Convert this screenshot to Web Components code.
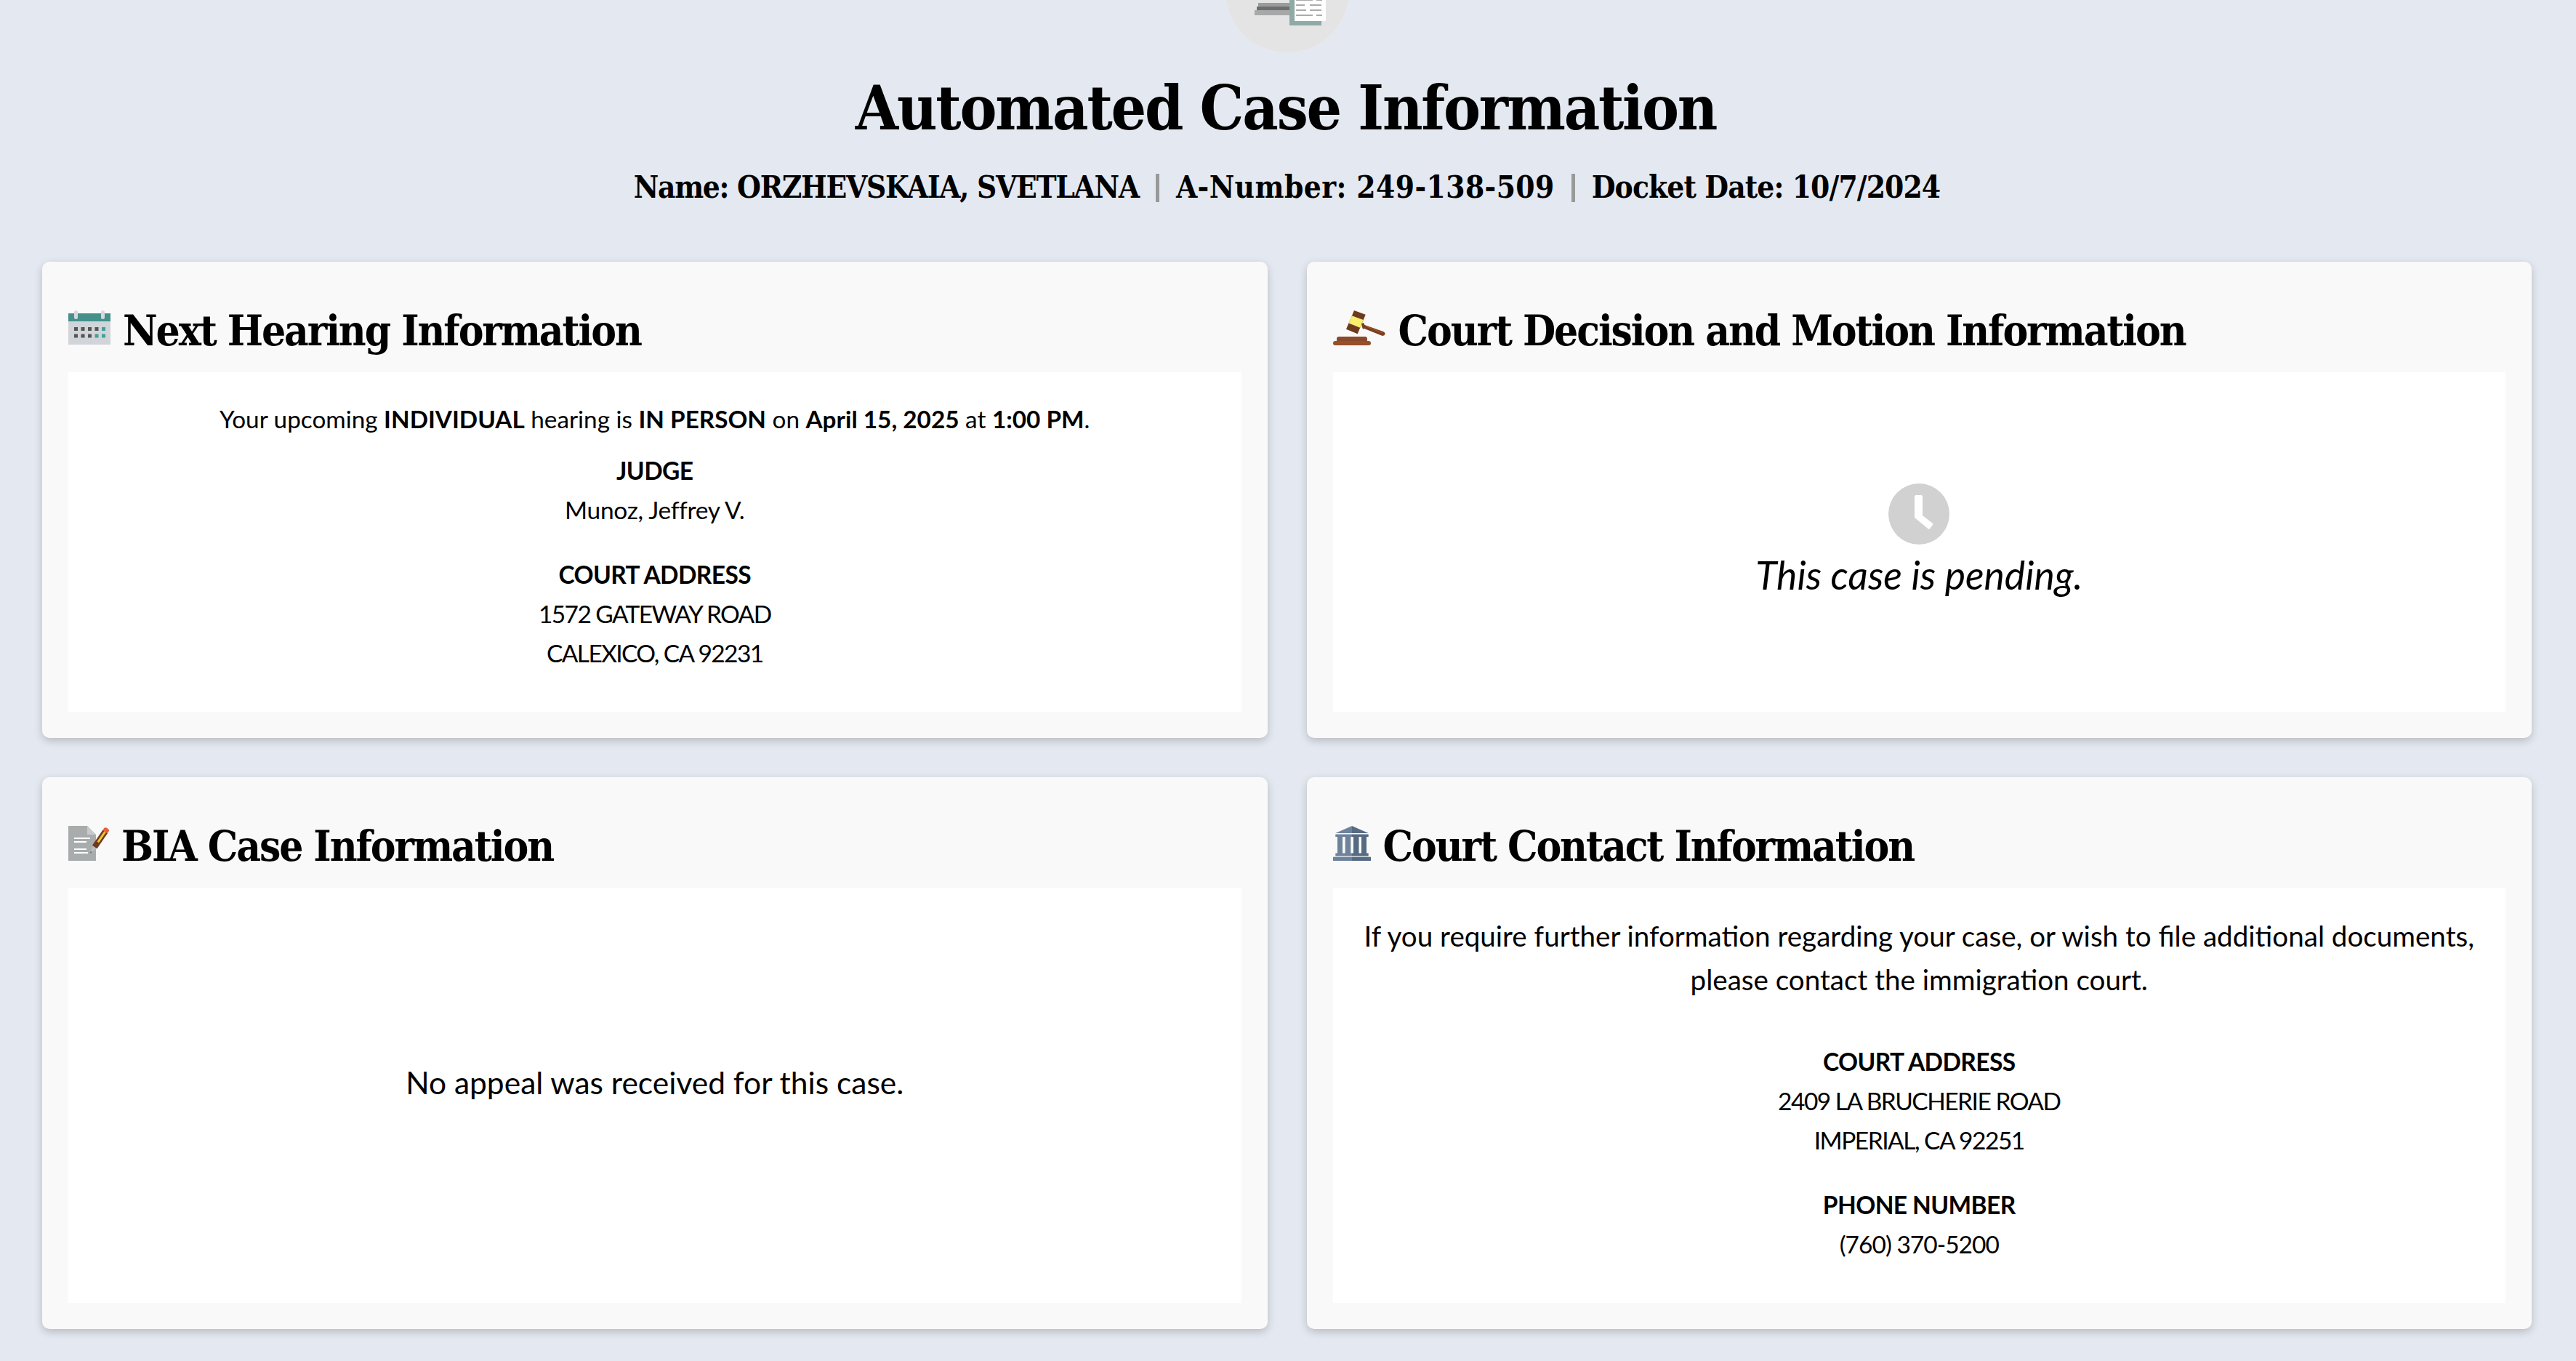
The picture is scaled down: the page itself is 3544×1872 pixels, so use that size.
<!DOCTYPE html>
<html lang="en">
<head>
<meta charset="utf-8">
<title>Automated Case Information</title>
<style>
  html, body { margin: 0; height: 100%; overflow: hidden; background: #e4e9f1; }
  body { font-family: "Lato", "Noto Sans", sans-serif; color: #000; }
</style>
</head>
<body>
<case-page>
  <case-header slot="header" name="ORZHEVSKAIA, SVETLANA" a-number="249-138-509" docket="10/7/2024"></case-header>

  <info-card heading="Next Hearing Information" icon="calendar" fit="hearing">
    <case-text>Your upcoming <b>INDIVIDUAL</b> hearing is <b>IN PERSON</b> on <b>April 15, 2025</b> at <b>1:00 PM</b>.</case-text>
    <case-field label="JUDGE" gap="17" track="-0.3">Munoz, Jeffrey V.</case-field>
    <case-field label="COURT ADDRESS" gap="35" track="-1.6">1572 GATEWAY ROAD<br>CALEXICO, CA 92231</case-field>
  </info-card>

  <info-card heading="Court Decision and Motion Information" icon="gavel" fit="center">
    <case-pending>This case is pending.</case-pending>
  </info-card>

  <info-card heading="BIA Case Information" icon="document" fit="center">
    <case-note size="42.500" lift="36">No appeal was received for this case.</case-note>
  </info-card>

  <info-card heading="Court Contact Information" icon="court" fit="contact">
    <case-note size="38.600">If you require further information regarding your case, or wish to file additional documents,<br>please contact the immigration court.</case-note>
    <case-field label="COURT ADDRESS" gap="56" track="-1.5">2409 LA BRUCHERIE ROAD<br>IMPERIAL, CA 92251</case-field>
    <case-field label="PHONE NUMBER" gap="35" track="-1">(760) 370-5200</case-field>
  </info-card>
</case-page>

<script>
const ICONS = {
  calendar: `<svg width="58" height="48" viewBox="0 0 58 48">
    <rect y="4" width="58" height="43" fill="#d1d4d8"/>
    <rect y="4" width="58" height="11" fill="#43918a"/>
    <rect x="8" width="5" height="12" rx="2.5" fill="#d5d8dc"/><rect x="45" width="5" height="12" rx="2.5" fill="#d5d8dc"/>
    <g fill="#555">
      <rect x="8" y="23" width="5" height="5"/><rect x="17.500" y="23" width="5" height="5"/><rect x="27" y="23" width="5" height="5"/><rect x="36.500" y="23" width="5" height="5"/>
      <rect x="8" y="32.500" width="5" height="5"/><rect x="17.500" y="32.500" width="5" height="5"/><rect x="27" y="32.500" width="5" height="5"/>
    </g>
    <g fill="#43a098">
      <rect x="46" y="23" width="5" height="5"/><rect x="36.500" y="32.500" width="5" height="5"/><rect x="46" y="32.500" width="5" height="5"/>
    </g>
  </svg>`,
  gavel: `<svg width="73" height="48" viewBox="0 0 73 48">
    <path d="M5 42v-3q0-3 3-3h36q3 0 3 3v3z" fill="#8a4a2a"/>
    <rect y="42" width="52" height="6" rx="3" fill="#96502b"/>
    <path d="M29 0L44.700 5.700 33.700 32.300 18 25.700z" fill="#6e3a1e"/>
    <path d="M25.900 7.200L41.600 13.100 37.200 23.800 21.500 17.500z" fill="#f8f06c"/>
    <path d="M39 18l3-1 1.500 3L69 29q3 1.500 2.500 3.500T68 35L43 25l-2 .5-1-2.500z" fill="#7b3f1f"/>
    <path d="M46 22L68 31" stroke="#a25a30" stroke-width="1"/>
  </svg>`,
  document: `<svg width="56" height="48" viewBox="0 0 56 48">
    <path d="M0 0h26l12 12v36H0z" fill="#a9acac"/>
    <path d="M26 0l12 12H26z" fill="#c8cbcb"/>
    <g fill="#fff">
      <rect x="8" y="16" width="22" height="2"/><rect x="8" y="21" width="17" height="2"/>
      <rect x="8" y="31" width="17" height="2"/><rect x="8" y="36" width="19" height="2"/>
    </g>
    <g transform="translate(30 38) rotate(34.500)">
      <path d="M0 0L-3.500-11H3.500z" fill="#b5bdbd"/>
      <path d="M0 0l-1-3h2z" fill="#555"/>
      <rect x="-4" y="-37" width="8" height="26" fill="#6e3a1e"/>
      <rect x="-1.500" y="-37" width="3" height="18" fill="#f4c430"/>
      <rect x="-4" y="-42" width="8" height="6" rx="3" fill="#e8603c"/>
    </g>
  </svg>`,
  court: `<svg width="52" height="48" viewBox="0 0 52 48">
    <linearGradient id="half" gradientUnits="userSpaceOnUse" x1="0" y1="0" x2="52" y2="0">
      <stop offset="0.5" stop-color="#6f829c"/><stop offset="0.5" stop-color="#566a82"/>
    </linearGradient>
    <g fill="url(#half)">
      <path d="M26 0L48.700 10H3.300z"/>
      <rect x="3.300" y="11.500" width="45.400" height="3.500"/>
      <rect x="6" y="15" width="7" height="23"/><rect x="16.700" y="15" width="7.600" height="23"/>
      <rect x="28" y="15" width="7.500" height="23"/><rect x="39" y="15" width="7" height="23"/>
      <rect x="3.300" y="37.500" width="45.400" height="4"/>
      <rect y="42.700" width="52" height="5.300"/>
    </g>
  </svg>`
};

class CasePage extends HTMLElement {
  constructor() {
    super();
    this.attachShadow({ mode: "open" });
    this.shadowRoot.innerHTML = `
      <style>
        :host { display: block; padding: 0 61px 0 58px; }
        .grid {
          display: grid;
          grid-template-columns: 1fr 1fr;
          gap: 54px;
        }
      </style>
      <slot name="header"></slot>
      <div class="grid"><slot></slot></div>
    `;
  }
}

class CaseHeader extends HTMLElement {
  constructor() {
    super();
    this.attachShadow({ mode: "open" });
  }

  connectedCallback() {
    this.shadowRoot.innerHTML = `
      <style>
        :host {
          display: flow-root;
          height: 360px;
          text-align: center;
          font-family: "DejaVu Serif", "Liberation Serif", serif;
          font-stretch: condensed;
          font-weight: 700;
        }
        .logo { display: block; margin: -98px auto 0; width: 170px; height: 170px; }
        h1 { margin: 26px 3px 0 0; font-size: 85px; line-height: 100px; font-weight: 700; letter-spacing: -2.200px; }
        .meta {
          display: flex;
          justify-content: center;
          align-items: center;
          gap: 23px;
          margin-top: 32px;
          font-size: 42px;
          line-height: 56px;
        }
        .name { letter-spacing: -1.300px; }
        .number { letter-spacing: 0.400px; }
        .docket { letter-spacing: -0.900px; }
        .sep { width: 5px; height: 39px; background: #999; }
      </style>
      <svg class="logo" viewBox="0 0 170 170">
        <circle cx="85" cy="85" r="85" fill="#e4e4e4"/>
        <g fill="#c4c6c6"><rect x="56" y="84" width="6" height="14"/><rect x="68" y="84" width="6" height="14"/><rect x="80" y="84" width="6" height="14"/></g>
        <rect x="45" y="102" width="44" height="6" fill="#9a9c9c"/>
        <rect x="43" y="107" width="46" height="6" fill="#6d6f6c"/>
        <rect x="40" y="112" width="49" height="7" fill="#a6a8a9"/>
        <rect x="88" y="80" width="44" height="53" fill="#8fa9a5"/>
        <rect x="95" y="80" width="43" height="47" fill="#fff"/>
        <g fill="#ababab">
          <rect x="97" y="97" width="23" height="2"/><rect x="125" y="97" width="8" height="2"/>
          <rect x="97" y="104" width="12" height="2"/><rect x="116" y="104" width="16" height="2"/>
          <rect x="97" y="111" width="14" height="2"/><rect x="116" y="111" width="16" height="2"/>
          <rect x="97" y="118" width="23" height="2"/><rect x="125" y="118" width="8" height="2"/>
        </g>
      </svg>
      <h1>Automated Case Information</h1>
      <div class="meta">
        <span class="name">Name: ${this.getAttribute("name")}</span>
        <span class="sep"></span>
        <span class="number">A-Number: ${this.getAttribute("a-number")}</span>
        <span class="sep"></span>
        <span class="docket">Docket Date: ${this.getAttribute("docket")}</span>
      </div>
    `;
  }
}

class InfoCard extends HTMLElement {
  constructor() {
    super();
    this.attachShadow({ mode: "open" });
  }

  connectedCallback() {
    const fit = this.getAttribute("fit");
    this.shadowRoot.innerHTML = `
      <style>
        :host {
          display: flex;
          flex-direction: column;
          box-sizing: border-box;
          padding: 0 36px 36px;
          background: #f9f9f9;
          border-radius: 10px;
          box-shadow: 0 4px 12px rgba(0, 0, 0, 0.2);
        }
        h2 {
          display: flex;
          align-items: flex-end;
          gap: 17px;
          box-sizing: border-box;
          height: 152px;
          margin: 0;
          padding-bottom: 37px;
          font-family: "DejaVu Serif", "Liberation Serif", serif;
          font-stretch: condensed;
          font-size: 58px;
          line-height: 1;
          font-weight: 700;
          letter-spacing: -2.100px;
        }
        h2 span { position: relative; top: 9px; white-space: nowrap; }
        svg { display: block; flex: none; }
        .body {
          flex: 1;
          background: #fff;
          text-align: center;
          box-sizing: border-box;
          ${fit === "center" ? "display:flex;align-items:center;justify-content:center;" : ""}
          ${fit === "hearing" ? "padding:37px 20px 54px;height:470px;" : ""}
          ${fit === "contact" ? "padding:36px 20px 54px;height:572px;" : ""}
        }
      </style>
      <h2>${ICONS[this.getAttribute("icon")]}<span>${this.getAttribute("heading")}</span></h2>
      <div class="body"><slot></slot></div>
    `;
  }
}

class CaseText extends HTMLElement {
  constructor() {
    super();
    this.attachShadow({ mode: "open" });
    this.shadowRoot.innerHTML = `
      <style>:host { display: block; font-size: 33.300px; line-height: 54px; }</style>
      <slot></slot>
    `;
  }
}

class CaseField extends HTMLElement {
  constructor() {
    super();
    this.attachShadow({ mode: "open" });
  }

  connectedCallback() {
    this.shadowRoot.innerHTML = `
      <style>
        :host {
          display: block;
          font-size: 33.500px;
          line-height: 54px;
          margin-top: ${this.getAttribute("gap")}px;
          letter-spacing: ${this.getAttribute("track") || 0}px;
        }
        .label { font-weight: 700; letter-spacing: -0.6px; }
      </style>
      <div class="label">${this.getAttribute("label")}</div>
      <slot></slot>
    `;
  }
}

class CaseNote extends HTMLElement {
  constructor() {
    super();
    this.attachShadow({ mode: "open" });
  }

  connectedCallback() {
    this.shadowRoot.innerHTML = `
      <style>
        :host {
          display: block;
          font-size: ${this.getAttribute("size")}px;
          line-height: 60px;
          white-space: nowrap;
          margin-bottom: ${this.getAttribute("lift") || 0}px;
        }
      </style>
      <slot></slot>
    `;
  }
}

class CasePending extends HTMLElement {
  constructor() {
    super();
    this.attachShadow({ mode: "open" });
    this.shadowRoot.innerHTML = `
      <style>
        :host { display: block; font-size: 53.500px; line-height: 62px; font-style: italic; margin-bottom: 5px; }
        svg { display: block; margin: 0 auto 10px; }
      </style>
      <svg width="84" height="84" viewBox="0 0 84 84">
        <circle cx="42" cy="42" r="42" fill="#d1d1d1"/>
        <path d="M36 18a2 2 0 0 1 2-2h7a2 2 0 0 1 2 2v26l13.500 10.500a2 2 0 0 1 .4 2.800l-3.500 4.500a2 2 0 0 1-2.800.4L36 47z" fill="#fff"/>
      </svg>
      <slot></slot>
    `;
  }
}

customElements.define("case-page", CasePage);
customElements.define("case-header", CaseHeader);
customElements.define("info-card", InfoCard);
customElements.define("case-text", CaseText);
customElements.define("case-field", CaseField);
customElements.define("case-note", CaseNote);
customElements.define("case-pending", CasePending);
</script>
</body>
</html>
